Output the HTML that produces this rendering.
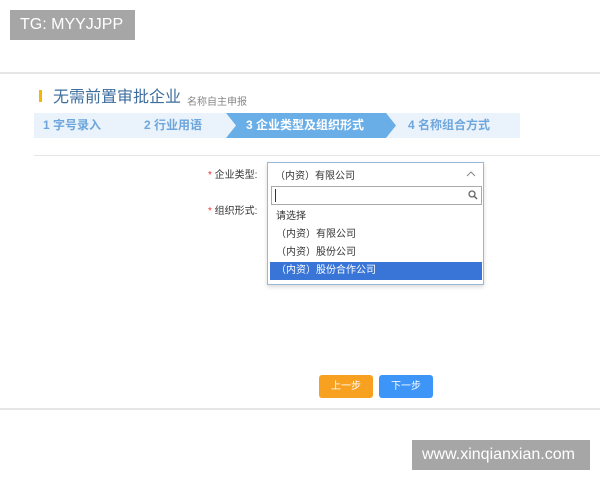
<!DOCTYPE html>
<html><head><meta charset="utf-8"><style>
*{margin:0;padding:0;box-sizing:border-box}
body{width:600px;height:480px;background:#fff;position:relative;overflow:hidden;font-family:"Liberation Sans","Noto Sans CJK SC",sans-serif}
.a{position:absolute}
.wm{background:#a6a6a6;color:#fff;font-size:16px;line-height:30px;padding-left:10px}
.step{position:absolute;top:113px;height:25px;line-height:25px;font-size:12px;color:#6ea6dc;font-weight:bold}
.opt{position:absolute;left:270px;width:212px;height:18px;line-height:18px;font-size:10px;color:#333}
</style></head><body>
<div class="a wm" style="left:10px;top:10px;width:125px;height:30px">TG: MYYJJPP</div>
<div class="a" style="left:0;top:72px;width:600px;height:2px;background:#e6e6e6"></div>
<div class="a" style="left:39px;top:90px;width:3px;height:12px;background:#f5b800"></div>
<div class="a" style="left:53px;top:87px;font-size:16px;color:#3d6e9e;line-height:22px">无需前置审批企业</div>
<div class="a" style="left:187px;top:93px;font-size:10px;color:#888">名称自主申报</div>
<div class="a" style="left:34px;top:113px;width:486px;height:25px;background:#eaf3fc"></div>
<svg class="a" style="left:226px;top:113px" width="170" height="25"><polygon points="0,0 160,0 170,12.5 160,25 0,25 10,12.5" fill="#6aaee8"/></svg>
<div class="step" style="left:43px">1 字号录入</div>
<div class="step" style="left:144px">2 行业用语</div>
<div class="step" style="left:246px;color:#fff">3 企业类型及组织形式</div>
<div class="step" style="left:408px">4 名称组合方式</div>
<div class="a" style="left:34px;top:155px;width:566px;height:1px;background:#e6e6e6"></div>
<div class="a" style="left:208px;top:166px;font-size:10px;color:#333"><span style="color:#e33">*</span> 企业类型:</div>
<div class="a" style="left:208px;top:202px;font-size:10px;color:#333"><span style="color:#e33">*</span> 组织形式:</div>
<div class="a" style="left:267px;top:162px;width:217px;height:123px;border:1px solid #9bb7d6;box-shadow:0 2px 4px rgba(0,0,0,.15);background:#fff"></div>
<div class="a" style="left:275px;top:167px;font-size:10px;color:#333">（内资）有限公司</div>
<svg class="a" style="left:466px;top:170px" width="10" height="8"><path d="M1,6 L5,2 L9,6" stroke="#888" fill="none"/></svg>
<div class="a" style="left:271px;top:186px;width:211px;height:19px;border:1px solid #aaa"></div>
<div class="a" style="left:275px;top:189px;width:1px;height:13px;background:#333"></div>
<svg class="a" style="left:468px;top:190px" width="10" height="10"><circle cx="4" cy="4" r="3" stroke="#666" fill="none" stroke-width="1.3"/><path d="M6.5,6.5 L9,9" stroke="#666" stroke-width="1.5"/></svg>
<div class="opt" style="top:208px;padding-left:6px">请选择</div>
<div class="opt" style="top:226px;padding-left:6px">（内资）有限公司</div>
<div class="opt" style="top:244px;padding-left:6px">（内资）股份公司</div>
<div class="opt" style="top:262px;padding-left:6px;background:#3875d7;color:#fff">（内资）股份合作公司</div>
<div class="a" style="left:319px;top:375px;width:54px;height:23px;background:#f8a121;border-radius:3px;color:#fff;font-size:10px;line-height:23px;text-align:center">上一步</div>
<div class="a" style="left:379px;top:375px;width:54px;height:23px;background:#3d95f7;border-radius:3px;color:#fff;font-size:10px;line-height:23px;text-align:center">下一步</div>
<div class="a" style="left:0;top:408px;width:600px;height:2px;background:#e6e6e6"></div>
<div class="a wm" style="left:412px;top:440px;width:178px;height:30px">www.xinqianxian.com</div>
</body></html>
